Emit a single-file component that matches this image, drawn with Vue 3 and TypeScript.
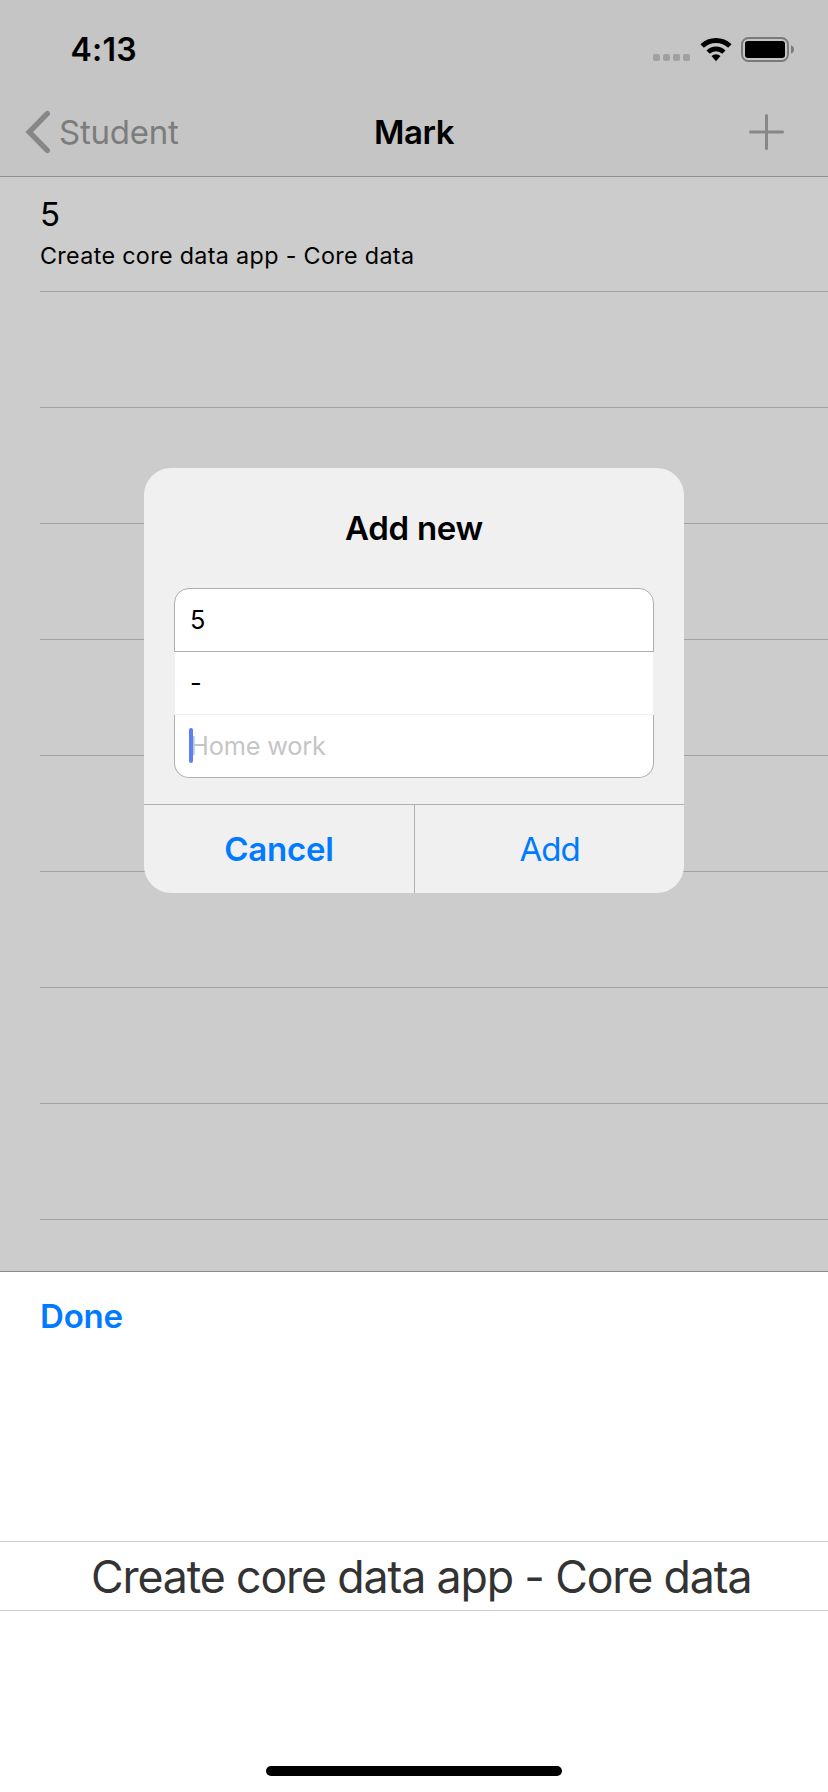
<script setup lang="ts">
import { ref } from 'vue'

interface Mark {
  value: string
  task: string
}

const ROW_COUNT = 10
const marks = ref<Mark[]>([{ value: '5', task: 'Create core data app - Core data' }])
const signalDots = [0, 1, 2, 3]
const pickerItem = 'Create core data app - Core data'
</script>

<template>
  <div class="screen">
    <header class="top">
      <div class="status">
        <span class="time">4:13</span>
        <div class="indicators">
          <div class="dots"><i v-for="d in signalDots" :key="d"></i></div>
          <svg class="wifi" width="34" height="26" viewBox="0 0 34 26" fill="none" stroke="#000">
            <path d="M3.15 9A20.1 20.1 0 0 1 30.85 9" stroke-width="5" />
            <path d="M9.1 15.1A11.5 11.5 0 0 1 24.9 15.1" stroke-width="4.7" />
            <path d="M12.5 19.1A6.3 6.3 0 0 1 21.5 19.1L17 24.2Z" fill="#000" stroke="none" />
          </svg>
          <svg class="battery" width="54" height="25" viewBox="0 0 54 25">
            <rect x="1" y="1" width="46" height="23" rx="6.5" fill="none" stroke="#7a7a7a" stroke-width="2" />
            <rect x="4" y="4" width="40" height="17" rx="3" fill="#000" />
            <path d="M50 8.3C52 9 53 10.7 53 12.5S52 16 50 16.7Z" fill="#7a7a7a" />
          </svg>
        </div>
      </div>
      <nav class="nav">
        <div class="back">
          <svg width="26" height="44" viewBox="0 0 26 44" fill="none" stroke="#878787" stroke-width="5.4">
            <path d="M22.3 3.7L4.2 22L22.3 40.3" stroke-linecap="round" stroke-linejoin="miter" />
          </svg>
          <span>Student</span>
        </div>
        <h1>Mark</h1>
        <div class="plus">
          <svg width="36" height="36" viewBox="0 0 36 36" stroke="#878787" stroke-width="3" stroke-linecap="round">
            <path d="M1.5 18H33.5M17.5 1.5V34.5" />
          </svg>
        </div>
      </nav>
    </header>

    <main class="list">
      <div v-for="n in ROW_COUNT" :key="n" class="row">
        <div class="cell">
          <template v-if="marks[n - 1]">
            <span class="value">{{ marks[n - 1].value }}</span>
            <span class="task">{{ marks[n - 1].task }}</span>
          </template>
        </div>
      </div>
    </main>

    <section class="sheet">
      <div class="toolbar"><span>Done</span></div>
      <div class="picker">
        <div class="selected">{{ pickerItem }}</div>
      </div>
      <div class="home"></div>
    </section>

    <div class="alert">
      <h2>Add new</h2>
      <div class="fields">
        <div class="field first">5</div>
        <div class="field middle">-</div>
        <div class="field last"><span class="hint">Home work</span><i class="caret"></i></div>
      </div>
      <div class="actions">
        <div class="action cancel">Cancel</div>
        <div class="action add">Add</div>
      </div>
    </div>
  </div>
</template>

<style>
body {
  margin: 0;
}
</style>

<style scoped>
* {
  box-sizing: border-box;
}
.screen {
  position: relative;
  display: flex;
  flex-direction: column;
  width: 828px;
  height: 1792px;
  overflow: hidden;
  background: #ccc;
  color: #000;
  font-family: Inter, 'Liberation Sans', sans-serif;
}
h1,
h2 {
  margin: 0;
  font-size: 33px;
  font-weight: 600;
}
.top {
  flex: none;
  height: 177px;
  background: #c5c5c5;
  border-bottom: 1px solid #8f8f8f;
}
.status {
  display: flex;
  justify-content: space-between;
  height: 88px;
  padding: 0 33px 0 70.5px;
}
.time {
  height: 100px;
  line-height: 100px;
  font-size: 32px;
  font-weight: 600;
  letter-spacing: 0.2px;
}
.indicators {
  display: flex;
  align-items: flex-start;
  padding-top: 37px;
}
.dots {
  display: flex;
  gap: 3px;
  margin-top: 17px;
}
.dots i {
  width: 7px;
  height: 7px;
  border-radius: 2px;
  background: #a0a0a0;
}
.wifi {
  margin-left: 8.5px;
}
.battery {
  margin-left: 8.5px;
}
.nav {
  display: grid;
  grid-template-columns: 1fr auto 1fr;
  align-items: center;
  height: 88px;
}
.nav h1 {
  letter-spacing: -0.4px;
}
.back {
  display: flex;
  align-items: center;
  padding-left: 25px;
  color: #7c7c7c;
  font-size: 33px;
  letter-spacing: -0.25px;
}
.back span {
  margin-left: 8px;
}
.plus {
  display: flex;
  justify-content: flex-end;
  padding-right: 43px;
}
.list {
  flex: none;
  height: 1094px;
  overflow: hidden;
}
.row {
  height: 116px;
  padding-left: 40px;
}
.row:first-child {
  height: 115px;
}
.cell {
  display: flex;
  flex-direction: column;
  height: 100%;
  border-bottom: 1px solid #a1a1a1;
}
.value {
  height: 42px;
  margin-top: 16px;
  line-height: 42px;
  font-size: 33px;
}
.task {
  height: 30px;
  margin-top: 6px;
  line-height: 30px;
  font-size: 23.3px;
  letter-spacing: 0.34px;
}
.sheet {
  display: flex;
  flex: 1;
  flex-direction: column;
  border-top: 1px solid #8c8c8c;
  background: #fff;
}
.toolbar {
  height: 88px;
  padding-left: 40px;
  color: #007aff;
  line-height: 88px;
  font-size: 33px;
  font-weight: 600;
  letter-spacing: -0.2px;
}
.picker {
  height: 406px;
  padding-top: 181px;
}
.selected {
  height: 70px;
  padding-left: 91px;
  border: solid #cbcbcb;
  border-width: 1px 0;
  color: #333;
  line-height: 70px;
  font-size: 44.7px;
  letter-spacing: -1.15px;
  white-space: nowrap;
}
.home {
  align-self: center;
  width: 296px;
  height: 10px;
  border-radius: 5px;
  background: #000;
}
.alert {
  position: absolute;
  top: 468px;
  left: 144px;
  width: 540px;
  height: 425px;
  overflow: hidden;
  border-radius: 27px;
  background: #f0f0f0;
}
.alert h2 {
  height: 120px;
  line-height: 120px;
  text-align: center;
  letter-spacing: -0.25px;
}
.fields {
  height: 190px;
  margin: 0 30px;
}
.field {
  display: flex;
  align-items: center;
  padding: 0 15px 2px;
  background: #fff;
  font-size: 25.3px;
}
.first {
  height: 64px;
  border: 1px solid #aeaeae;
  border-radius: 15px 15px 0 0;
}
.middle {
  height: 63px;
  margin: 0 1px;
  border-bottom: 1px solid #f0f0f0;
}
.last {
  position: relative;
  height: 63px;
  border: 1px solid #aeaeae;
  border-top: 0;
  border-radius: 0 0 15px 15px;
}
.hint {
  color: #c5c5c7;
  letter-spacing: -0.15px;
}
.caret {
  position: absolute;
  top: 13px;
  left: 14px;
  width: 4px;
  height: 35px;
  border-radius: 2px;
  background: #5b7ff5;
}
.actions {
  display: grid;
  grid-template-columns: 271px 1fr;
  height: 89px;
  margin-top: 26px;
  border-top: 1px solid #b0b0b0;
  color: #007aff;
  line-height: 88px;
  font-size: 33px;
  text-align: center;
}
.cancel {
  border-right: 1px solid #b0b0b0;
  font-weight: 600;
  letter-spacing: -0.2px;
}
.add {
  letter-spacing: -1px;
}
</style>
